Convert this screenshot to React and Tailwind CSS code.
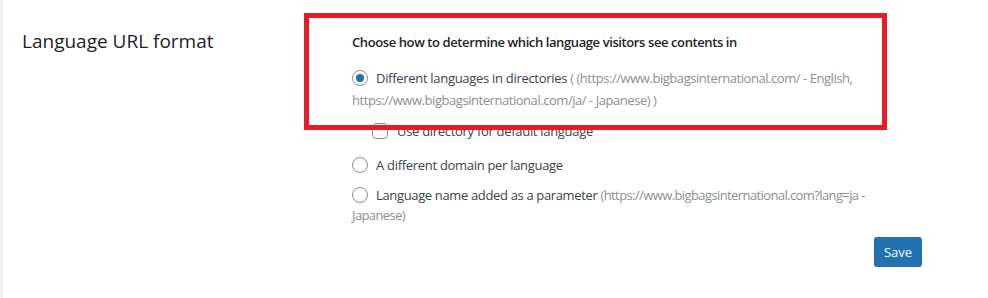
import React from "react";

const font = { fontFamily: '"Segoe UI", "Open Sans", "Noto Sans", sans-serif' };

function Radio({ checked }) {
  return (
    <span className="relative inline-block align-[-3px] w-[16px] h-[16px] rounded-full border border-[#8c8f94] bg-white mr-[8px]">
      {checked && (
        <span className="absolute left-[3px] top-[3px] w-[8px] h-[8px] rounded-full bg-[#2271b1]" />
      )}
    </span>
  );
}

export default function App() {
  return (
    <div
      className="relative w-[988px] h-[298px] bg-white border-l-[3px] border-[#f0f0f1] text-[#3c434a] overflow-hidden"
      style={font}
    >
      <div className="flex">
        <div className="w-[349px] pl-[19px] pt-[27px] text-[19px] leading-[28px] text-[#1d2327]">
          Language URL format
        </div>
        <div className="flex flex-col w-[570px] pt-[32px] text-[13px] whitespace-nowrap">
          <div className="font-semibold text-[#1d2327] leading-[20px] tracking-[-0.4px]">
            Choose how to determine which language visitors see contents in
          </div>
          <div className="mt-[15px] leading-[22px] tracking-[-0.3px]">
            <Radio checked />
            Different languages in directories{" "}
            <span className="text-[#8c8f94] tracking-[-0.45px]">
              ( (https://www.bigbagsinternational.com/ - English,
              <br />
              https://www.bigbagsinternational.com/ja/ - Japanese) )
            </span>
          </div>
          <div className="mt-[10px] pl-[20px] leading-[20px] flex items-center tracking-[-0.3px]">
            <span className="inline-block w-[16px] h-[16px] rounded-[4px] border border-[#8c8f94] bg-white mr-[9px]" />
            Use directory for default language
          </div>
          <div className="mt-[13px] leading-[22px] tracking-[-0.3px]">
            <Radio />
            A different domain per language
          </div>
          <div className="mt-[9px] leading-[20px] tracking-[-0.35px]">
            <Radio />
            Language name added as a parameter{" "}
            <span className="text-[#8c8f94] tracking-[-0.6px]">
              (https://www.bigbagsinternational.com?lang=ja -
              <br />
              Japanese)
            </span>
          </div>
          <div className="flex mt-[12px] pl-[522px]">
            <button className="w-[48px] h-[30px] rounded-[3px] bg-[#2271b1] text-white text-[13px] leading-[28px]">
              Save
            </button>
          </div>
        </div>
      </div>
      <div className="absolute left-[301px] top-[13px] w-[583px] h-[117px] border-[5px] border-[#e41e26] pointer-events-none" />
    </div>
  );
}
